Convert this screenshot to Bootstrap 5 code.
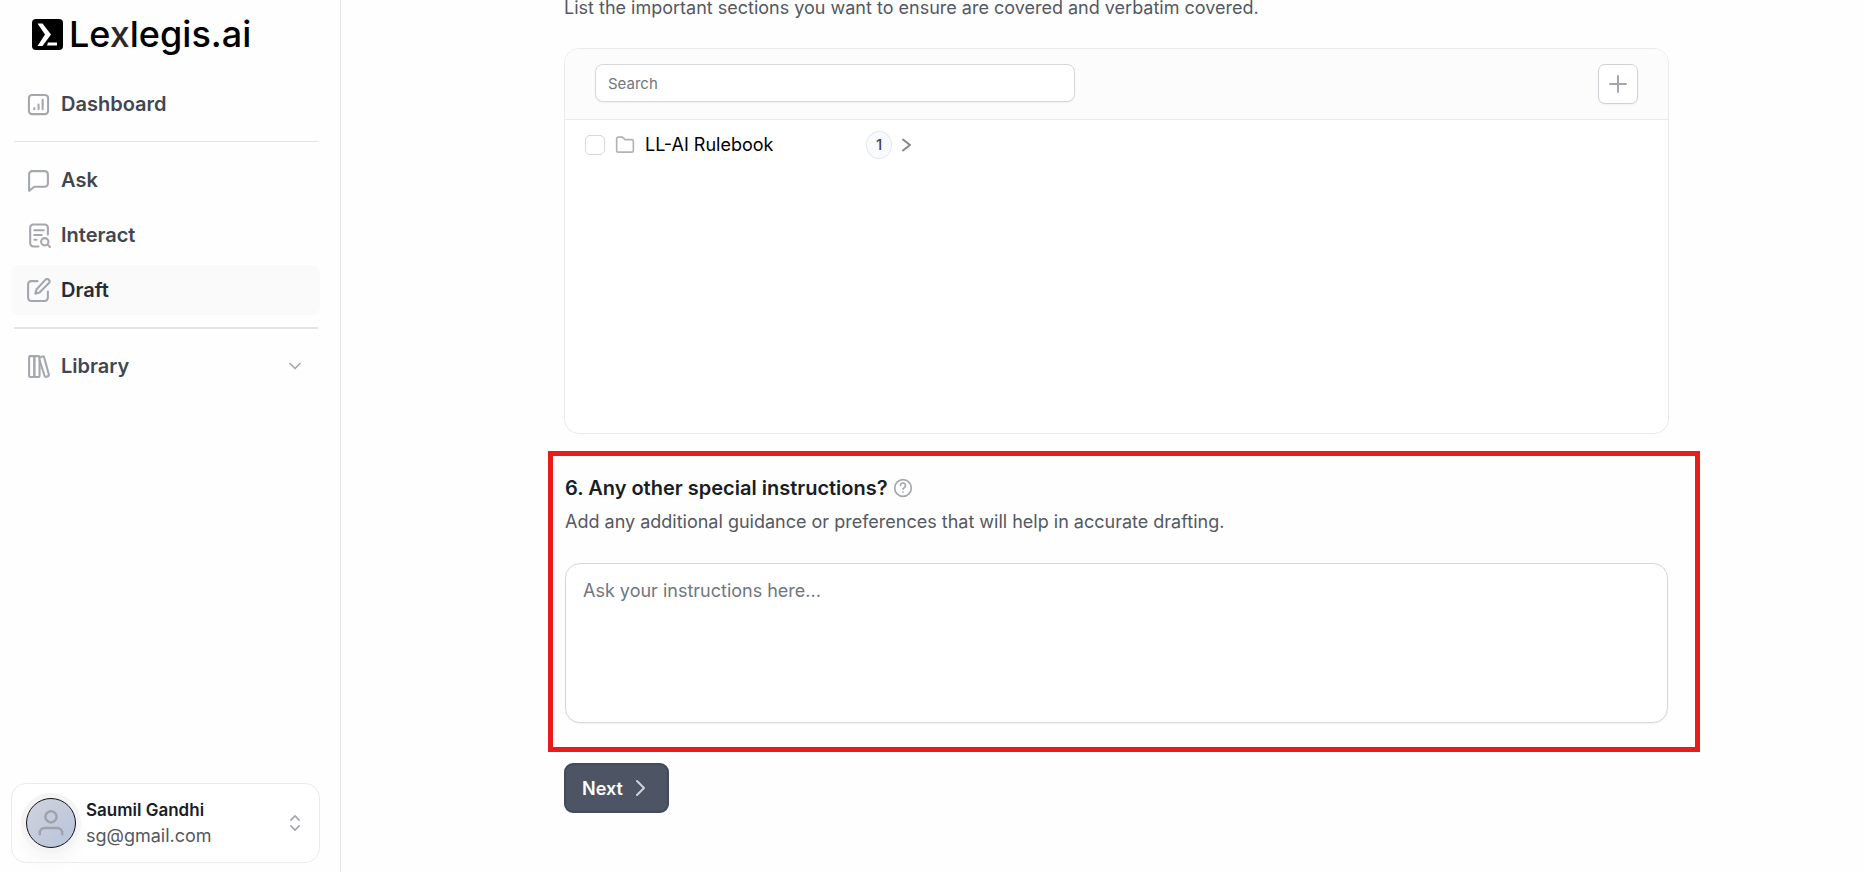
<!DOCTYPE html>
<html lang="en">
<head>
<meta charset="utf-8">
<meta name="viewport" content="width=device-width, initial-scale=1">
<title>Lexlegis.ai – Draft</title>
<link href="https://cdn.jsdelivr.net/npm/bootstrap@5.3.0/dist/css/bootstrap.min.css" rel="stylesheet">
<style>
  body { font-family: Inter, "Liberation Sans", sans-serif; color: #18181f; background: #fefefe; }
  svg { fill: none; stroke: currentColor; stroke-width: 2; stroke-linecap: round; stroke-linejoin: round; flex: none; }
  .app-sidebar { width: 341px; flex: none; border-right: 1px solid #e5e5e7; padding: 9px 20px 9px 11px; }
  .brand { color: #000; font-size: 36px; line-height: 50px; font-weight: 500; gap: 6px; padding-left: 21px; margin-bottom: 20px; }
  .brand-x { color: #2b2829; }
  .side-nav { gap: 5px; }
  .side-link { height: 50px; padding: 0 15px; gap: 10px; border-radius: 8px; font-size: 20px; line-height: 30px; font-weight: 600; color: #414651; }
  .side-link svg { color: #a4a7ae; }
  .side-link.active { background: #fafafa; color: #252b37; }
  .side-rule { border: 0; border-top: 1px solid #e4e4e6; opacity: 1; margin: 7px 2px 8px 3px; }
  .side-rule.thick { border-top-width: 2px; margin-bottom: 7px; }
  .profile { height: 80px; border: 1px solid #e9eaeb; border-radius: 15px; padding: 0 14px 0 10px; gap: 10px; background: #fff; font-size: 18px; line-height: 25px; color: #535862; }
  .profile strong { font-weight: 600; color: #181d27; font-size: 17px; }
  .profile > svg { color: #a4a7ae; }
  .avatar { width: 50px; height: 50px; border: 1px solid #111; border-radius: 50%; background: linear-gradient(135deg, #cfd3dc, #b8c4dc); color: #9ea3ab; box-shadow: 0 0 0 5px #f4f4f4, 0 10px 16px 4px #f6f6f6; }
  .form-area { padding: 0 163px 0 207px; margin-top: -5px; min-width: 0; }
  .inset { padding: 0 31px 0 16px; }
  .hint { font-size: 18px; line-height: 25px; color: #535862; margin: 0; }
  .panel { height: 386px; border: 1px solid #e9eaeb; border-radius: 15px; overflow: hidden; background: #fff; margin-top: 28px; }
  .panel-top { height: 71px; padding: 15px 30px; background: #fcfcfc; border-bottom: 1px solid #e9eaeb; }
  .search-box { width: 480px; height: 38px; border: 1px solid #d5d7da; border-radius: 8px; padding: 0 12px; font-size: 15px; box-shadow: 0 1px 2px #0a0d120d; }
  .search-box::placeholder, .notes::placeholder { color: #717680; opacity: 1; }
  .add-btn { width: 40px; height: 40px; border: 1px solid #d0d1d6; border-radius: 7px; background: #fff; color: #a4a7ae; box-shadow: 0 1px 2px #0a0d120d; }
  .rule-row { padding: 11px 20px; gap: 10px; font-size: 18px; line-height: 28px; color: #000; }
  .rule-row .form-check-input { width: 20px; height: 20px; border: 1px solid #d5d7da; border-radius: 5px; margin: 0; flex: none; }
  .rule-name { width: 211px; }
  .count { width: 26px; height: 28px; border: 1px solid #e2e8f0; border-radius: 50%; background: #f8fafc; font-size: 15px; font-weight: 500; color: #414651; }
  .marked { border: 5px solid #e91c1c; margin-top: 17px; padding: 17px 27px 24px 12px; }
  .marked h2 { font-size: 20px; line-height: 30px; font-weight: 600; margin: 0; color: #181d27; }
  .title-row { gap: 5px; margin-bottom: 6px; }
  .notes { height: 160px; border: 1px solid #d5d7da; border-radius: 15px; padding: 13px 17px; font-size: 18px; line-height: 28px; resize: none; box-shadow: 0 1px 2px #0a0d120d; margin-top: 29px; }
  .next-btn { height: 50px; padding: 0 21px 0 16px; gap: 11px; border: 2px solid #414b5a; border-radius: 9px; background: #4d5564; color: #fff; font-size: 18px; font-weight: 600; margin-top: 11px; }
  @media (max-width: 1100px) { .form-area { padding: 0 16px; } .search-box { width: 60%; } }
</style>
</head>
<body>
<div class="d-flex min-vh-100">
  <aside class="app-sidebar d-flex flex-column">
    <a href="#" class="brand d-flex align-items-center text-decoration-none">
      <svg width="31" height="31" viewBox="0 0 31 31"><rect width="31" height="31" rx="4" fill="#000" stroke="none"/><path d="M5.500 4.500H10.500L19 15.500 10.500 27H5.500L13 15.500zM16 23.500h9v3H15z" fill="#fff" stroke="none"/></svg>
      <span>Le<span class="brand-x">x</span>legis.ai</span>
    </a>
    <nav class="side-nav d-flex flex-column" aria-label="Main">
      <a href="#" class="side-link d-flex align-items-center text-decoration-none"><svg width="25" height="25" viewBox="0 0 24 24"><rect x="2.800" y="2.800" width="18.400" height="18.400" rx="3"/><path d="M8 16.500v-1M12 16.500v-4.500M16 16.500v-9"/></svg>Dashboard</a>
      <hr class="side-rule">
      <a href="#" class="side-link d-flex align-items-center text-decoration-none"><svg width="25" height="25" viewBox="0 0 24 24"><path d="M6 3h12a3 3 0 0 1 3 3v9a3 3 0 0 1-3 3H8l-5 4V6a3 3 0 0 1 3-3z"/></svg>Ask</a>
      <a href="#" class="side-link d-flex align-items-center text-decoration-none"><svg width="25" height="25" viewBox="0 0 24 24"><path d="M21 11V4.500A3 3 0 0 0 18 1.500H7a3 3 0 0 0-3 3v15a3 3 0 0 0 3 3h5M8 7h9M8 11.500h7M8 16h2"/><circle cx="18" cy="18" r="3.500"/><path d="m21 21 2 2"/></svg>Interact</a>
      <a href="#" class="side-link active d-flex align-items-center text-decoration-none" aria-current="page"><svg width="25" height="25" viewBox="0 0 24 24"><path d="M11 3H5a3 3 0 0 0-3 3v13a3 3 0 0 0 3 3h13a3 3 0 0 0 3-3v-6M18.500 1.800a2.300 2.300 0 0 1 3.500 3L13 14l-4 1 1-4z"/></svg>Draft</a>
      <hr class="side-rule thick">
      <a href="#" class="side-link d-flex align-items-center text-decoration-none"><svg width="25" height="25" viewBox="0 0 24 24"><rect x="3" y="2" width="5" height="20" rx="1"/><rect x="8" y="2" width="5" height="20" rx="1"/><path d="m13 3.500 3-1.200q1-.3 1.300.6L22 20q.2 1-.8 1.300l-2 .6q-1 .2-1.300-.8L13 6"/></svg>Library<svg class="ms-auto" width="20" height="20" viewBox="0 0 24 24"><path d="m6 9 6 6 6-6"/></svg></a>
    </nav>
    <button type="button" class="profile d-flex align-items-center text-start mt-auto w-100">
      <span class="avatar d-flex align-items-center justify-content-center flex-shrink-0 ms-1"><svg width="30" height="30" viewBox="0 0 24 24"><circle cx="12" cy="7" r="4.500"/><path d="M3 21v-1a4 4 0 0 1 4-4h10a4 4 0 0 1 4 4v1"/></svg></span>
      <span><strong class="d-block">Saumil Gandhi</strong>sg@gmail.com</span>
      <svg class="ms-auto" width="20" height="20" viewBox="0 0 24 24"><path d="m7 8.500 5-5 5 5M7 15.500l5 5 5-5"/></svg>
    </button>
  </aside>

  <main class="form-area flex-grow-1">
    <div class="inset">
      <p class="hint">List the important sections you want to ensure are covered and verbatim covered.</p>
      <section class="panel" aria-label="Sections">
        <div class="panel-top d-flex justify-content-between align-items-start">
          <input type="search" class="search-box" placeholder="Search" aria-label="Search">
          <button type="button" class="add-btn d-flex align-items-center justify-content-center p-0" aria-label="Add"><svg width="24" height="24" viewBox="0 0 24 24"><path d="M12 4v16M4 12h16"/></svg></button>
        </div>
        <div class="rule-row d-flex align-items-center">
          <input class="form-check-input" type="checkbox" id="rulebook">
          <svg width="20" height="20" viewBox="0 0 24 24" color="#b4b4b8"><path d="M2 4.500a2 2 0 0 1 2-2h5l3 3h8a2 2 0 0 1 2 2v11a2 2 0 0 1-2 2H4a2 2 0 0 1-2-2z"/></svg>
          <label class="rule-name" for="rulebook">LL-AI Rulebook</label>
          <span class="count d-flex align-items-center justify-content-center">1</span>
          <svg width="12" height="14" viewBox="0 0 12 14" color="#85888e" stroke-width="1.500"><path d="m1 1.500 7 5.500-7 5.500"/></svg>
        </div>
      </section>
    </div>
    <section class="marked">
      <div class="title-row d-flex align-items-center">
        <h2><label for="notes">6. Any other special instructions?</label></h2>
        <svg width="20" height="20" viewBox="0 0 24 24" color="#a4a7ae"><circle cx="12" cy="12" r="10"/><path d="M9 9a3 3 0 1 1 4.500 2.600Q12 12.300 12 13.500M12 17v.1"/></svg>
      </div>
      <p class="hint">Add any additional guidance or preferences that will help in accurate drafting.</p>
      <textarea id="notes" class="notes d-block w-100" placeholder="Ask your instructions here..."></textarea>
    </section>
    <div class="inset">
      <button type="button" class="next-btn d-flex align-items-center">Next<svg width="12" height="18" viewBox="0 0 12 18" color="#cfd3da"><path d="m3 2 7 7-7 7"/></svg></button>
    </div>
  </main>
</div>
<script src="https://cdn.jsdelivr.net/npm/bootstrap@5.3.0/dist/js/bootstrap.bundle.min.js"></script>
</body>
</html>
